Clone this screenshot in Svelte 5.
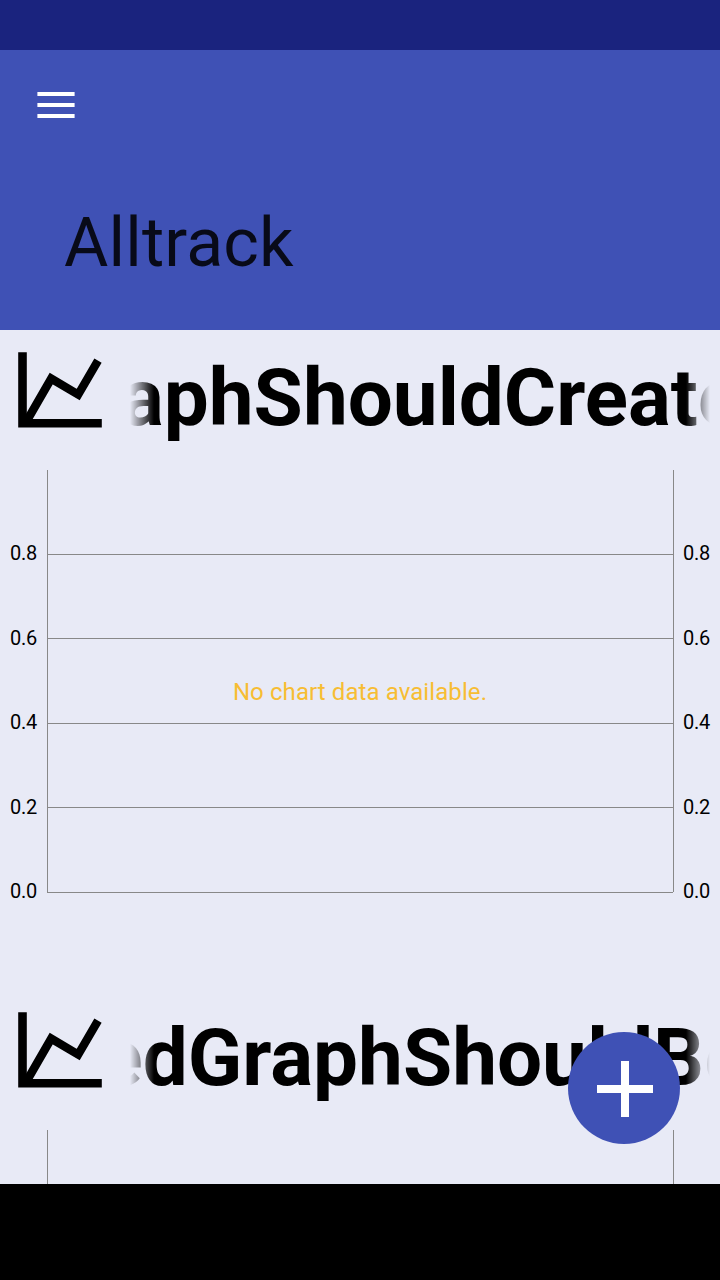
<script>
  const graphs = [
    {
      title: 'aphShouldCreate',
      indent: -9,
      empty: 'No chart data available.',
      ticks: [
        { label: '0.8', y: 84.5, base: 90 },
        { label: '0.6', y: 168.5, base: 175 },
        { label: '0.4', y: 253.5, base: 259 },
        { label: '0.2', y: 337.5, base: 344 },
        { label: '0.0', y: 422.5, base: 428 }
      ]
    },
    { title: 'edGraphShouldBe', indent: -30.5, empty: '', ticks: [] }
  ];
</script>

<div class="screen">
  <div class="status"></div>
  <header>
    <svg class="menu" width="38" height="26" viewBox="0 0 38 26" aria-label="Menu">
      <path d="M.4 0h37.2v4H.4zM.4 11h37.2v4H.4zM.4 22h37.2v4H.4z" fill="#fff" />
    </svg>
    <h1>Alltrack</h1>
  </header>
  <main>
    {#each graphs as graph}
      <section>
        <div class="heading">
          <svg class="icon" width="120" height="140" viewBox="0 0 120 140">
            <path d="M18.2 22.2h8.6V89h75v8.5H18.2z" />
            <path d="M25.5 93.2L51.2 48.6L78.2 64.6L98 30.6" fill="none" stroke="#000" stroke-width="8.4" />
          </svg>
          <h2 style:text-indent="{graph.indent}px">{graph.title}</h2>
        </div>
        <svg class="chart" width="720" height="520" viewBox="0 0 720 520">
          <path d="M47.5 0V422.5M673.5 0V422" />
          {#each graph.ticks as tick}
            <path d="M47 {tick.y}H673" />
            <text x="10" y={tick.base}>{tick.label}</text>
            <text x="683" y={tick.base}>{tick.label}</text>
          {/each}
          {#if graph.empty}
            <text class="empty" x="360" y="230" text-anchor="middle">{graph.empty}</text>
          {/if}
        </svg>
      </section>
    {/each}
    <button class="fab" aria-label="Add">
      <svg width="56" height="56" viewBox="0 0 56 56">
        <path d="M24 0h8v24h24v8H32v24h-8V32H0v-8h24z" fill="#fff" />
      </svg>
    </button>
  </main>
  <div class="nav"></div>
</div>

<style>
  .screen {
    width: 720px;
    height: 1280px;
    display: flex;
    flex-direction: column;
    overflow: hidden;
    font-family: Roboto, sans-serif;
    color: #000;
  }
  .status { height: 50px; background: #1a237e; }
  header {
    height: 280px;
    box-sizing: border-box;
    padding: 42px 0 0 37px;
    background: #3f51b5;
  }
  svg { display: block; flex: none; }
  h1 {
    margin: 85px 0 0 27px;
    font-size: 68px;
    font-weight: 400;
    line-height: 80px;
    letter-spacing: 0.15px;
    color: rgba(0, 0, 0, 0.87);
  }
  main {
    position: relative;
    height: 854px;
    background: #e8eaf6;
    overflow: hidden;
  }
  section { height: 660px; }
  .heading { display: flex; height: 140px; }
  h2 {
    width: 580px;
    height: 94px;
    margin: 21px 0 0 10px;
    overflow: hidden;
    white-space: nowrap;
    font-size: 80px;
    font-weight: 700;
    line-height: 94px;
    -webkit-mask-image: linear-gradient(90deg, transparent, #000 24px, #000 556px, transparent);
    mask-image: linear-gradient(90deg, transparent, #000 24px, #000 556px, transparent);
  }
  .chart path { fill: none; stroke: #888; stroke-width: 1; }
  .chart text { font-size: 20px; letter-spacing: -0.25px; }
  .chart .empty { font-size: 24px; letter-spacing: 0.09px; fill: #f7bd33; }
  .fab {
    position: absolute;
    right: 40px;
    bottom: 40px;
    display: grid;
    place-items: center;
    width: 112px;
    height: 112px;
    padding: 2px 0 0 2px;
    border: 0;
    border-radius: 50%;
    background: #3f51b5;
  }
  .nav { height: 96px; background: #000; }
</style>
